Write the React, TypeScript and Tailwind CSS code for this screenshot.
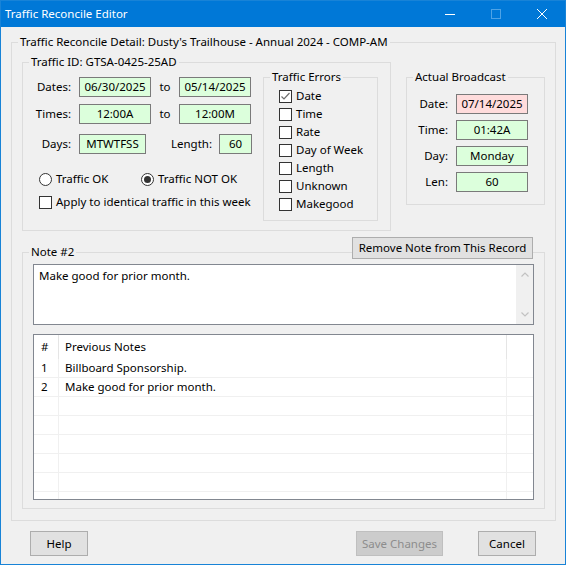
import React from "react";

type GroupProps = { label: string; className?: string; inner?: string; children?: React.ReactNode };

// WinForms-style group box: border with the caption cut into the top edge
function Group({ label, className = "", inner = "", children }: GroupProps) {
  return (
    <fieldset className={`border border-[#dcdcdc] ${className}`}>
      <legend className="ml-[6px] px-[2px] leading-4">{label}</legend>
      <div className={inner}>{children}</div>
    </fieldset>
  );
}

function Field({ value, bad = false, w = "w-[72px]" }: { value: string; bad?: boolean; w?: string }) {
  return (
    <div
      className={`${w} h-[20px] shrink-0 border border-[#7a7a7a] flex items-center justify-center ${
        bad ? "bg-[#ffdcdc]" : "bg-[#dcffdc]"
      }`}
    >
      {value}
    </div>
  );
}

function Check({ checked = false }: { checked?: boolean }) {
  return (
    <span className="w-[13px] h-[13px] shrink-0 border border-[#333333] bg-white flex items-center justify-center">
      {checked && (
        <svg width="11" height="11" viewBox="0 0 11 11">
          <path d="M1.5 5.5 L4 8 L9.5 2" stroke="#6d6d6d" strokeWidth="1.2" fill="none" />
        </svg>
      )}
    </span>
  );
}

function Radio({ on = false }: { on?: boolean }) {
  return (
    <span className="w-[13px] h-[13px] shrink-0 rounded-full border border-[#333333] bg-white flex items-center justify-center">
      {on && <span className="w-[7px] h-[7px] rounded-full bg-[#333333]" />}
    </span>
  );
}

function Button({ children, w, disabled = false }: { children: React.ReactNode; w: string; disabled?: boolean }) {
  return (
    <button
      className={`${w} h-[25px] border flex items-center justify-center ${
        disabled ? "bg-[#cccccc] border-[#bfbfbf] text-[#8d8d8d]" : "bg-[#e1e1e1] border-[#adadad] text-black"
      }`}
    >
      {children}
    </button>
  );
}

const errors = ["Date", "Time", "Rate", "Day of Week", "Length", "Unknown", "Makegood"];
const notes = ["Billboard Sponsorship.", "Make good for prior month."];

export default function App() {
  return (
    <div className="w-[566px] h-[565px] border border-[#1883d7] bg-[#f0f0f0] flex flex-col font-['Noto_Sans',sans-serif] text-[11.5px] text-black">
      {/* title bar */}
      <div className="h-[26px] bg-[#0078d7] flex items-center text-white shrink-0">
        <span className="pl-[4px]">Traffic Reconcile Editor</span>
        <div className="ml-auto flex h-full">
          <div className="w-[46px] flex items-center justify-center">
            <span className="w-[10px] h-px bg-white" />
          </div>
          <div className="w-[46px] flex items-center justify-center">
            <span className="w-[10px] h-[10px] border border-[#4ea3e6]" />
          </div>
          <div className="w-[46px] flex items-center justify-center">
            <svg width="10" height="10" viewBox="0 0 10 10">
              <path d="M0 0 L10 10 M10 0 L0 10" stroke="white" strokeWidth="1" />
            </svg>
          </div>
        </div>
      </div>

      {/* outer group */}
      <Group
        label="Traffic Reconcile Detail: Dusty's Trailhouse - Annual 2024 - COMP-AM"
        className="ml-[10px] mt-[7px] w-[545px] h-[487px]"
        inner="px-[10px]"
      >
        <div className="flex items-start mt-[4px]">
          <Group label="Traffic ID: GTSA-0425-25AD" className="w-[369px] h-[177px]">
            <div className="flex items-start">
              <div className="w-[240px] pt-[7px]">
                <div className="flex items-center">
                  <span className="w-[48px] text-right">Dates:</span>
                  <span className="w-[8px]" />
                  <Field value="06/30/2025" />
                  <span className="w-[28px] text-center">to</span>
                  <Field value="05/14/2025" />
                </div>
                <div className="flex items-center mt-[7px]">
                  <span className="w-[48px] text-right">Times:</span>
                  <span className="w-[8px]" />
                  <Field value="12:00A" />
                  <span className="w-[28px] text-center">to</span>
                  <Field value="12:00M" />
                </div>
                <div className="flex items-center mt-[10px]">
                  <span className="w-[48px] text-right">Days:</span>
                  <span className="w-[8px]" />
                  <Field value="MTWTFSS" w="w-[67px]" />
                  <span className="w-[66px] text-right">Length:</span>
                  <span className="w-[7px]" />
                  <Field value="60" w="w-[33px]" />
                </div>
                <div className="flex items-center h-[16px] mt-[17px] pl-[16px]">
                  <label className="w-[102px] flex items-center gap-[4px]">
                    <Radio />
                    <span>Traffic OK</span>
                  </label>
                  <label className="flex items-center gap-[4px]">
                    <Radio on />
                    <span>Traffic NOT OK</span>
                  </label>
                </div>
                <label className="flex items-center gap-[4px] h-[16px] mt-[7px] pl-[16px]">
                  <Check />
                  <span>Apply to identical traffic in this week</span>
                </label>
              </div>
              <Group
                label="Traffic Errors"
                className="w-[115px] h-[152px] -mt-[1px]"
                inner="pl-[15px] pt-[2px]"
              >
                {errors.map((e, i) => (
                  <label key={e} className="h-[18px] flex items-center gap-[4px]">
                    <Check checked={i === 0} />
                    <span>{e}</span>
                  </label>
                ))}
              </Group>
            </div>
          </Group>

          <Group
            label="Actual Broadcast"
            className="ml-[15px] mt-[15px] w-[139px] h-[136px]"
            inner="pt-[9px] flex flex-col gap-[6px]"
          >
            {[
              ["Date:", "07/14/2025", true],
              ["Time:", "01:42A", false],
              ["Day:", "Monday", false],
              ["Len:", "60", false],
            ].map(([l, v, bad]) => (
              <div key={l as string} className="flex items-center">
                <span className="w-[41px] text-right">{l as string}</span>
                <span className="w-[8px]" />
                <Field value={v as string} bad={bad as boolean} />
              </div>
            ))}
          </Group>
        </div>

        {/* remove button sits over the note group's border */}
        <div className="flex justify-end mt-[6px] pr-[12px] relative z-10">
          <button className="w-[181px] h-[22px] bg-[#e1e1e1] border border-[#adadad] flex items-center justify-center">
            Remove Note from This Record
          </button>
        </div>

        <Group label="Note #2" className="-mt-[15px] w-[523px] h-[265px]" inner="px-[10px] pt-[4px]">
          <div className="h-[61px] border border-[#828790] bg-white flex">
            <div className="flex-1 pl-[5px] pt-[3px] leading-4">Make good for prior month.</div>
            <div className="w-[17px] bg-[#f0f0f0] flex flex-col items-center justify-between py-[7px]">
              <svg width="8" height="5" viewBox="0 0 8 5">
                <path d="M0.5 4.5 L4 1 L7.5 4.5" stroke="#c2c2c2" strokeWidth="1.2" fill="none" />
              </svg>
              <svg width="8" height="5" viewBox="0 0 8 5">
                <path d="M0.5 0.5 L4 4 L7.5 0.5" stroke="#c2c2c2" strokeWidth="1.2" fill="none" />
              </svg>
            </div>
          </div>

          <div className="mt-[9px] h-[166px] border border-[#828790] bg-white overflow-hidden">
            <div className="flex h-[24px] items-center">
              <div className="w-[25px] h-full pl-[7px] flex items-center border-r border-[#e5e5e5]">#</div>
              <div className="w-[448px] h-full pl-[6px] flex items-center border-r border-[#e5e5e5]">
                Previous Notes
              </div>
            </div>
            {Array.from({ length: 8 }).map((_, i) => (
              <div key={i} className="flex h-[19px] border-b border-[#f0f0f0]">
                <div className="w-[25px] pl-[7px] flex items-center border-r border-[#f0f0f0]">
                  {notes[i] ? i + 1 : ""}
                </div>
                <div className="w-[448px] pl-[6px] flex items-center border-r border-[#f0f0f0]">{notes[i] ?? ""}</div>
              </div>
            ))}
          </div>
        </Group>
      </Group>

      {/* dialog buttons */}
      <div className="flex mt-[10px]">
        <div className="ml-[29px]">
          <Button w="w-[58px]">Help</Button>
        </div>
        <div className="ml-[268px]">
          <Button w="w-[87px]" disabled>
            Save Changes
          </Button>
        </div>
        <div className="ml-[35px]">
          <Button w="w-[58px]">Cancel</Button>
        </div>
      </div>
    </div>
  );
}
